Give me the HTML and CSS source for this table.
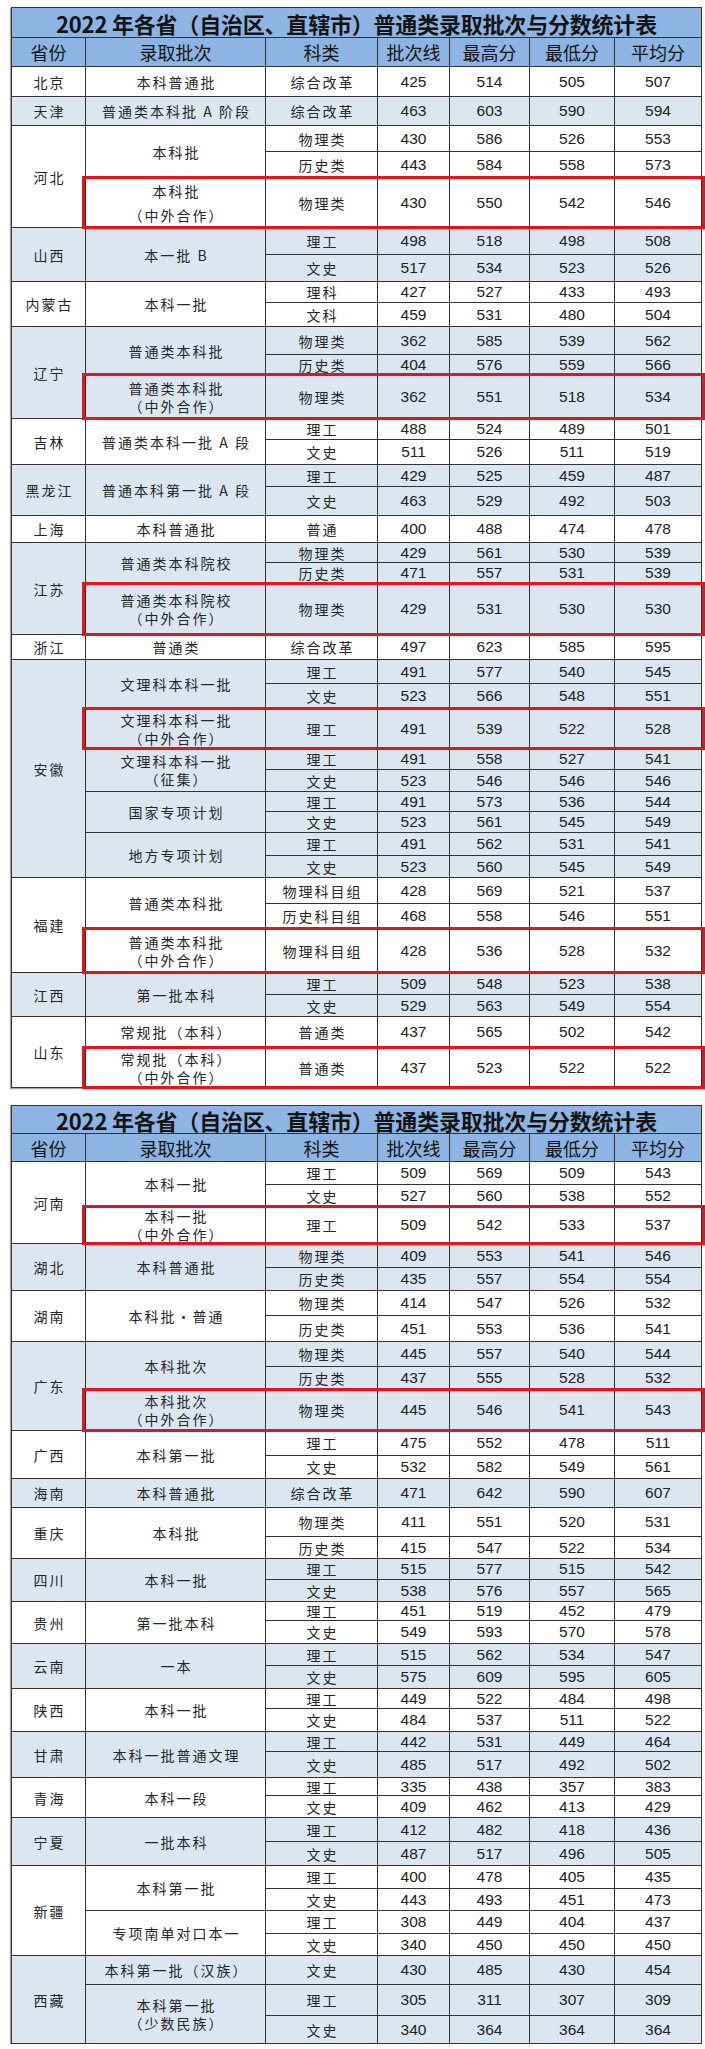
FILE: index.html
```html
<!DOCTYPE html>
<html lang="zh-CN">
<head>
<meta charset="utf-8">
<title>2022 年各省（自治区、直辖市）普通类录取批次与分数统计表</title>
<link rel="stylesheet" href="styles.css">
</head>
<body>
<div class="page">

<table class="grid">
  <colgroup><col class="c1"><col class="c2"><col class="c3"><col class="c4"><col class="c5"><col class="c6"><col class="c7"></colgroup>
  <thead>
    <tr class="h30"><th colspan="7" class="title">2022 年各省（自治区、直辖市）普通类录取批次与分数统计表</th></tr>
    <tr class="h29 head"><th>省份</th><th>录取批次</th><th>科类</th><th>批次线</th><th>最高分</th><th>最低分</th><th>平均分</th></tr>
  </thead>
  <tbody>
    <tr class="h30"><td class="t">北京</td><td class="t">本科普通批</td><td class="t">综合改革</td><td>425</td><td>514</td><td>505</td><td>507</td></tr>
  </tbody>
  <tbody class="alt">
    <tr class="h29"><td class="t">天津</td><td class="t">普通类本科批 A 阶段</td><td class="t">综合改革</td><td>463</td><td>603</td><td>590</td><td>594</td></tr>
  </tbody>
  <tbody>
    <tr class="h26"><td class="t" rowspan="3">河北</td><td class="t" rowspan="2">本科批</td><td class="t">物理类</td><td>430</td><td>586</td><td>526</td><td>553</td></tr>
    <tr class="h26"><td class="t">历史类</td><td>443</td><td>584</td><td>558</td><td>573</td></tr>
    <tr class="h50"><td class="t two wide mark">本科批<br>（中外合作）<span class="redbox"></span></td><td class="t">物理类</td><td>430</td><td>550</td><td>542</td><td>546</td></tr>
  </tbody>
  <tbody class="alt">
    <tr class="h27"><td class="t" rowspan="2">山西</td><td class="t" rowspan="2">本一批 B</td><td class="t">理工</td><td>498</td><td>518</td><td>498</td><td>508</td></tr>
    <tr class="h27"><td class="t">文史</td><td>517</td><td>534</td><td>523</td><td>526</td></tr>
  </tbody>
  <tbody>
    <tr class="h21"><td class="t" rowspan="2">内蒙古</td><td class="t" rowspan="2">本科一批</td><td class="t">理科</td><td>427</td><td>527</td><td>433</td><td>493</td></tr>
    <tr class="h24"><td class="t">文科</td><td>459</td><td>531</td><td>480</td><td>504</td></tr>
  </tbody>
  <tbody class="alt">
    <tr class="h28"><td class="t" rowspan="3">辽宁</td><td class="t" rowspan="2">普通类本科批</td><td class="t">物理类</td><td>362</td><td>585</td><td>539</td><td>562</td></tr>
    <tr class="h20"><td class="t">历史类</td><td>404</td><td>576</td><td>559</td><td>566</td></tr>
    <tr class="h44"><td class="t two mark">普通类本科批<br>（中外合作）<span class="redbox"></span></td><td class="t">物理类</td><td>362</td><td>551</td><td>518</td><td>534</td></tr>
  </tbody>
  <tbody>
    <tr class="h21"><td class="t" rowspan="2">吉林</td><td class="t" rowspan="2">普通类本科一批 A 段</td><td class="t">理工</td><td>488</td><td>524</td><td>489</td><td>501</td></tr>
    <tr class="h25"><td class="t">文史</td><td>511</td><td>526</td><td>511</td><td>519</td></tr>
  </tbody>
  <tbody class="alt">
    <tr class="h22"><td class="t" rowspan="2">黑龙江</td><td class="t" rowspan="2">普通本科第一批 A 段</td><td class="t">理工</td><td>429</td><td>525</td><td>459</td><td>487</td></tr>
    <tr class="h29"><td class="t">文史</td><td>463</td><td>529</td><td>492</td><td>503</td></tr>
  </tbody>
  <tbody>
    <tr class="h27"><td class="t">上海</td><td class="t">本科普通批</td><td class="t">普通</td><td>400</td><td>488</td><td>474</td><td>478</td></tr>
  </tbody>
  <tbody class="alt">
    <tr class="h20"><td class="t" rowspan="3">江苏</td><td class="t" rowspan="2">普通类本科院校</td><td class="t">物理类</td><td>429</td><td>561</td><td>530</td><td>539</td></tr>
    <tr class="h21"><td class="t">历史类</td><td>471</td><td>557</td><td>531</td><td>539</td></tr>
    <tr class="h51"><td class="t two mark">普通类本科院校<br>（中外合作）<span class="redbox"></span></td><td class="t">物理类</td><td>429</td><td>531</td><td>530</td><td>530</td></tr>
  </tbody>
  <tbody>
    <tr class="h25"><td class="t">浙江</td><td class="t">普通类</td><td class="t">综合改革</td><td>497</td><td>623</td><td>585</td><td>595</td></tr>
  </tbody>
  <tbody class="alt">
    <tr class="h24"><td class="t" rowspan="9">安徽</td><td class="t" rowspan="2">文理科本科一批</td><td class="t">理工</td><td>491</td><td>577</td><td>540</td><td>545</td></tr>
    <tr class="h25"><td class="t">文史</td><td>523</td><td>566</td><td>548</td><td>551</td></tr>
    <tr class="h40"><td class="t two mark">文理科本科一批<br>（中外合作）<span class="redbox"></span></td><td class="t">理工</td><td>491</td><td>539</td><td>522</td><td>528</td></tr>
    <tr class="h21"><td class="t two" rowspan="2">文理科本科一批<br>（征集）</td><td class="t">理工</td><td>491</td><td>558</td><td>527</td><td>541</td></tr>
    <tr class="h22"><td class="t">文史</td><td>523</td><td>546</td><td>546</td><td>546</td></tr>
    <tr class="h20"><td class="t" rowspan="2">国家专项计划</td><td class="t">理工</td><td>491</td><td>573</td><td>536</td><td>544</td></tr>
    <tr class="h21"><td class="t">文史</td><td>523</td><td>561</td><td>545</td><td>549</td></tr>
    <tr class="h23"><td class="t" rowspan="2">地方专项计划</td><td class="t">理工</td><td>491</td><td>562</td><td>531</td><td>541</td></tr>
    <tr class="h22"><td class="t">文史</td><td>523</td><td>560</td><td>545</td><td>549</td></tr>
  </tbody>
  <tbody>
    <tr class="h26"><td class="t" rowspan="3">福建</td><td class="t" rowspan="2">普通类本科批</td><td class="t">物理科目组</td><td>428</td><td>569</td><td>521</td><td>537</td></tr>
    <tr class="h25"><td class="t">历史科目组</td><td>468</td><td>558</td><td>546</td><td>551</td></tr>
    <tr class="h44"><td class="t two mark">普通类本科批<br>（中外合作）<span class="redbox"></span></td><td class="t">物理科目组</td><td>428</td><td>536</td><td>528</td><td>532</td></tr>
  </tbody>
  <tbody class="alt">
    <tr class="h22"><td class="t" rowspan="2">江西</td><td class="t" rowspan="2">第一批本科</td><td class="t">理工</td><td>509</td><td>548</td><td>523</td><td>538</td></tr>
    <tr class="h22"><td class="t">文史</td><td>529</td><td>563</td><td>549</td><td>554</td></tr>
  </tbody>
  <tbody>
    <tr class="h31"><td class="t" rowspan="2">山东</td><td class="t">常规批（本科）</td><td class="t">普通类</td><td>437</td><td>565</td><td>502</td><td>542</td></tr>
    <tr class="h40"><td class="t two mark">常规批（本科）<br>（中外合作）<span class="redbox"></span></td><td class="t">普通类</td><td>437</td><td>523</td><td>522</td><td>522</td></tr>
  </tbody>
</table>

<table class="grid">
  <colgroup><col class="c1"><col class="c2"><col class="c3"><col class="c4"><col class="c5"><col class="c6"><col class="c7"></colgroup>
  <thead>
    <tr class="h28"><th colspan="7" class="title">2022 年各省（自治区、直辖市）普通类录取批次与分数统计表</th></tr>
    <tr class="h28 head"><th>省份</th><th>录取批次</th><th>科类</th><th>批次线</th><th>最高分</th><th>最低分</th><th>平均分</th></tr>
  </thead>
  <tbody>
    <tr class="h23"><td class="t" rowspan="3">河南</td><td class="t" rowspan="2">本科一批</td><td class="t">理工</td><td>509</td><td>569</td><td>509</td><td>543</td></tr>
    <tr class="h22"><td class="t">文史</td><td>527</td><td>560</td><td>538</td><td>552</td></tr>
    <tr class="h37"><td class="t two mark">本科一批<br>（中外合作）<span class="redbox"></span></td><td class="t">理工</td><td>509</td><td>542</td><td>533</td><td>537</td></tr>
  </tbody>
  <tbody class="alt">
    <tr class="h24"><td class="t" rowspan="2">湖北</td><td class="t" rowspan="2">本科普通批</td><td class="t">物理类</td><td>409</td><td>553</td><td>541</td><td>546</td></tr>
    <tr class="h23"><td class="t">历史类</td><td>435</td><td>557</td><td>554</td><td>554</td></tr>
  </tbody>
  <tbody>
    <tr class="h25"><td class="t" rowspan="2">湖南</td><td class="t" rowspan="2">本科批•普通</td><td class="t">物理类</td><td>414</td><td>547</td><td>526</td><td>532</td></tr>
    <tr class="h26"><td class="t">历史类</td><td>451</td><td>553</td><td>536</td><td>541</td></tr>
  </tbody>
  <tbody class="alt">
    <tr class="h25"><td class="t" rowspan="3">广东</td><td class="t" rowspan="2">本科批次</td><td class="t">物理类</td><td>445</td><td>557</td><td>540</td><td>544</td></tr>
    <tr class="h23"><td class="t">历史类</td><td>437</td><td>555</td><td>528</td><td>532</td></tr>
    <tr class="h41"><td class="t two mark">本科批次<br>（中外合作）<span class="redbox"></span></td><td class="t">物理类</td><td>445</td><td>546</td><td>541</td><td>543</td></tr>
  </tbody>
  <tbody>
    <tr class="h25"><td class="t" rowspan="2">广西</td><td class="t" rowspan="2">本科第一批</td><td class="t">理工</td><td>475</td><td>552</td><td>478</td><td>511</td></tr>
    <tr class="h23"><td class="t">文史</td><td>532</td><td>582</td><td>549</td><td>561</td></tr>
  </tbody>
  <tbody class="alt">
    <tr class="h29"><td class="t">海南</td><td class="t">本科普通批</td><td class="t">综合改革</td><td>471</td><td>642</td><td>590</td><td>607</td></tr>
  </tbody>
  <tbody>
    <tr class="h29"><td class="t" rowspan="2">重庆</td><td class="t" rowspan="2">本科批</td><td class="t">物理类</td><td>411</td><td>551</td><td>520</td><td>531</td></tr>
    <tr class="h22"><td class="t">历史类</td><td>415</td><td>547</td><td>522</td><td>534</td></tr>
  </tbody>
  <tbody class="alt">
    <tr class="h21"><td class="t" rowspan="2">四川</td><td class="t" rowspan="2">本科一批</td><td class="t">理工</td><td>515</td><td>577</td><td>515</td><td>542</td></tr>
    <tr class="h22"><td class="t">文史</td><td>538</td><td>576</td><td>557</td><td>565</td></tr>
  </tbody>
  <tbody>
    <tr class="h19"><td class="t" rowspan="2">贵州</td><td class="t" rowspan="2">第一批本科</td><td class="t">理工</td><td>451</td><td>519</td><td>452</td><td>479</td></tr>
    <tr class="h23"><td class="t">文史</td><td>549</td><td>593</td><td>570</td><td>578</td></tr>
  </tbody>
  <tbody class="alt">
    <tr class="h22"><td class="t" rowspan="2">云南</td><td class="t" rowspan="2">一本</td><td class="t">理工</td><td>515</td><td>562</td><td>534</td><td>547</td></tr>
    <tr class="h23"><td class="t">文史</td><td>575</td><td>609</td><td>595</td><td>605</td></tr>
  </tbody>
  <tbody>
    <tr class="h20"><td class="t" rowspan="2">陕西</td><td class="t" rowspan="2">本科一批</td><td class="t">理工</td><td>449</td><td>522</td><td>484</td><td>498</td></tr>
    <tr class="h23"><td class="t">文史</td><td>484</td><td>537</td><td>511</td><td>522</td></tr>
  </tbody>
  <tbody class="alt">
    <tr class="h20"><td class="t" rowspan="2">甘肃</td><td class="t" rowspan="2">本科一批普通文理</td><td class="t">理工</td><td>442</td><td>531</td><td>449</td><td>464</td></tr>
    <tr class="h26"><td class="t">文史</td><td>485</td><td>517</td><td>492</td><td>502</td></tr>
  </tbody>
  <tbody>
    <tr class="h18"><td class="t" rowspan="2">青海</td><td class="t" rowspan="2">本科一段</td><td class="t">理工</td><td>335</td><td>438</td><td>357</td><td>383</td></tr>
    <tr class="h22"><td class="t">文史</td><td>409</td><td>462</td><td>413</td><td>429</td></tr>
  </tbody>
  <tbody class="alt">
    <tr class="h24"><td class="t" rowspan="2">宁夏</td><td class="t" rowspan="2">一批本科</td><td class="t">理工</td><td>412</td><td>482</td><td>418</td><td>436</td></tr>
    <tr class="h24"><td class="t">文史</td><td>487</td><td>517</td><td>496</td><td>505</td></tr>
  </tbody>
  <tbody>
    <tr class="h23"><td class="t" rowspan="4">新疆</td><td class="t" rowspan="2">本科第一批</td><td class="t">理工</td><td>400</td><td>478</td><td>405</td><td>435</td></tr>
    <tr class="h22"><td class="t">文史</td><td>443</td><td>493</td><td>451</td><td>473</td></tr>
    <tr class="h23"><td class="t" rowspan="2">专项南单对口本一</td><td class="t">理工</td><td>308</td><td>449</td><td>404</td><td>437</td></tr>
    <tr class="h22"><td class="t">文史</td><td>340</td><td>450</td><td>450</td><td>450</td></tr>
  </tbody>
  <tbody class="alt">
    <tr class="h29"><td class="t" rowspan="3">西藏</td><td class="t">本科第一批（汉族）</td><td class="t">文史</td><td>430</td><td>485</td><td>430</td><td>454</td></tr>
    <tr class="h31"><td class="t two" rowspan="2">本科第一批<br>（少数民族）</td><td class="t">理工</td><td>305</td><td>311</td><td>307</td><td>309</td></tr>
    <tr class="h28"><td class="t">文史</td><td>340</td><td>364</td><td>364</td><td>364</td></tr>
  </tbody>
</table>

</div>
</body>
</html>
```
FILE: styles.css
```css
* { box-sizing: border-box; }

html, body {
  margin: 0;
  padding: 0;
  background: #ffffff;
}

body {
  font-family: "Noto Sans CJK SC", "DejaVu Sans", sans-serif;
  color: #1e1e1e;
}

.page {
  padding: 7px 4px 0 11px;
}

.grid {
  width: 690px;
  border-collapse: collapse;
  table-layout: fixed;
  border: 1px solid #2b2b2b;
  box-shadow: -1px 1px 1px rgba(0, 0, 0, 0.35);
}

.grid + .grid {
  margin-top: 17px;
}

.c1 { width: 74px; }
.c2 { width: 180px; }
.c3 { width: 112px; }
.c4 { width: 72px; }
.c5 { width: 80px; }
.c6 { width: 85px; }
.c7 { width: 87px; }

.grid th,
.grid td {
  border: 1px solid #333333;
  padding: 0;
  text-align: center;
  vertical-align: middle;
}

.grid th {
  background: #8db4e2;
  color: #141414;
}

.title {
  font-size: 22px;
  font-weight: 700;
  line-height: 24px;
  letter-spacing: -0.2px;
}

.head th {
  font-size: 18px;
  font-weight: 400;
  line-height: 22px;
}

.grid td {
  font-family: "Liberation Sans Narrow", "Liberation Sans", "Noto Sans CJK SC", sans-serif;
  font-size: 15.5px;
  line-height: 16px;
  color: #222222;
}

.grid td.t {
  font-family: "Noto Sans CJK SC", sans-serif;
  font-size: 14px;
  letter-spacing: 2px;
  padding-left: 2px;
  color: #262626;
}

.grid td.two {
  line-height: 18px;
}

.grid td.wide {
  line-height: 24px;
}

.alt td {
  background: #dce6f1;
}

.mark {
  position: relative;
}

.redbox {
  position: absolute;
  left: -4px;
  top: -2px;
  bottom: -2px;
  width: 623px;
  border: 3px solid #e3141c;
  pointer-events: none;
}

.h18 { height: 18px; }
.h19 { height: 19px; }
.h20 { height: 20px; }
.h21 { height: 21px; }
.h22 { height: 22px; }
.h23 { height: 23px; }
.h24 { height: 24px; }
.h25 { height: 25px; }
.h26 { height: 26px; }
.h27 { height: 27px; }
.h28 { height: 28px; }
.h29 { height: 29px; }
.h30 { height: 30px; }
.h31 { height: 31px; }
.h37 { height: 37px; }
.h40 { height: 40px; }
.h41 { height: 41px; }
.h44 { height: 44px; }
.h50 { height: 50px; }
.h51 { height: 51px; }
```
